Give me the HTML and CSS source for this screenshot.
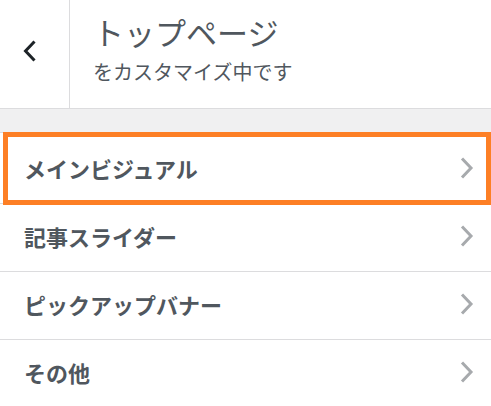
FILE: index.html
```html
<!DOCTYPE html>
<html lang="ja">
<head>
<meta charset="utf-8">
<title>トップページ</title>
<link rel="stylesheet" href="styles.css">
</head>
<body>
<div class="panel">
  <header class="header">
    <button class="back" aria-label="戻る">
      <svg width="14" height="22" viewBox="0 0 14 22"><polyline points="11.5,1.5 2.5,11 11.5,20.5" fill="none" stroke="#1d2327" stroke-width="3"/></svg>
    </button>
    <div class="heading">
      <h1 class="title">トップページ</h1>
      <p class="sub">をカスタマイズ中です</p>
    </div>
  </header>
  <div class="band"></div>
  <ul class="list">
    <li class="item first"><span>メインビジュアル</span><svg class="chev" width="14" height="22" viewBox="0 0 14 22"><polyline points="2,1.5 11,11 2,20.5" fill="none" stroke="#a7aaad" stroke-width="3"/></svg></li>
    <li class="item"><span>記事スライダー</span><svg class="chev" width="14" height="22" viewBox="0 0 14 22"><polyline points="2,1.5 11,11 2,20.5" fill="none" stroke="#a7aaad" stroke-width="3"/></svg></li>
    <li class="item"><span>ピックアップバナー</span><svg class="chev" width="14" height="22" viewBox="0 0 14 22"><polyline points="2,1.5 11,11 2,20.5" fill="none" stroke="#a7aaad" stroke-width="3"/></svg></li>
    <li class="item"><span>その他</span><svg class="chev" width="14" height="22" viewBox="0 0 14 22"><polyline points="2,1.5 11,11 2,20.5" fill="none" stroke="#a7aaad" stroke-width="3"/></svg></li>
  </ul>
</div>
</body>
</html>
```
FILE: styles.css
```css
html, body {
  margin: 0;
  padding: 0;
  background: #fff;
  overflow: hidden;
}
body {
  font-family: "Noto Sans CJK JP", "Noto Sans", sans-serif;
  color: #50575e;
}
.panel {
  width: 491px;
}
.header {
  display: flex;
  height: 108px;
  border-bottom: 1px solid #dcdcde;
  background: #fff;
}
.back {
  width: 70px;
  height: 108px;
  margin: 0;
  padding: 0 0 6px 23px;
  border: 0;
  border-right: 1px solid #dcdcde;
  background: #fff;
  display: flex;
  align-items: center;
  justify-content: flex-start;
  box-sizing: border-box;
}
.heading {
  padding: 12px 0 0 23px;
}
.title {
  margin: 0;
  font-size: 31px;
  line-height: 40px;
  font-weight: 400;
  color: #50575e;
}
.sub {
  margin: 6px 0 0;
  font-size: 20px;
  line-height: 28px;
  color: #50575e;
}
.band {
  height: 23px;
  background: #f0f0f1;
}
.list {
  list-style: none;
  margin: 0;
  padding: 0;
  border-top: 1px solid #dcdcde;
}
.item {
  position: relative;
  display: flex;
  align-items: center;
  justify-content: space-between;
  box-sizing: border-box;
  height: 68px;
  padding: 0 17px 3px 24px;
  border-bottom: 1px solid #dcdcde;
  font-size: 22px;
  font-weight: 700;
  color: #50575e;
}
.item.first {
  padding-top: 1px;
  padding-bottom: 2px;
  height: 71px;
}
.item.first::after {
  content: "";
  position: absolute;
  left: 3px;
  right: 0;
  top: -1px;
  bottom: -2px;
  border: 5px solid #fd7f25;
}
.item .chev {
  display: block;
}
```
